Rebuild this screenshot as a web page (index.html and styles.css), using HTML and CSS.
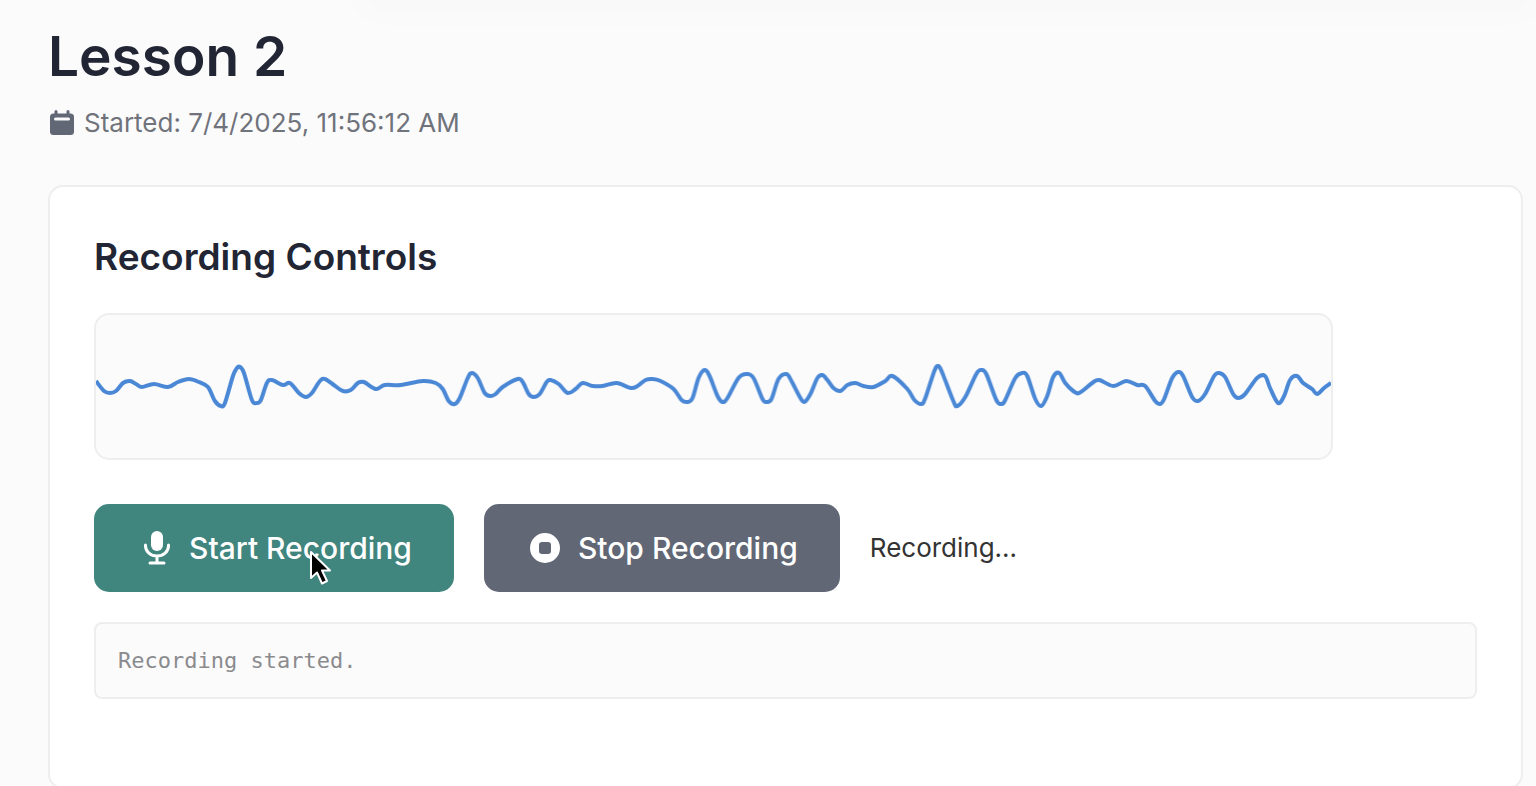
FILE: index.html
```html
<!DOCTYPE html>
<html lang="en">
<head>
    <meta charset="UTF-8">
    <meta name="viewport" content="width=device-width, initial-scale=1.0">
    <title>Lesson 2</title>
    <link rel="stylesheet" href="styles.css">
</head>
<body>
    <header class="lesson-header">
        <h1>Lesson 2</h1>
        <p class="started">
            <svg class="calendar-icon" viewBox="0 0 26 26" aria-hidden="true">
                <path d="M7 1.5v4M19 1.5v4" stroke="currentColor" stroke-width="3" stroke-linecap="round"/>
                <rect x="1" y="3.5" width="24" height="21.5" rx="3.5" fill="currentColor"/>
                <path d="M6.5 9h13" stroke="#fbfbfc" stroke-width="3" stroke-linecap="round"/>
            </svg>
            <span>Started: 7/4/2025, 11:56:12 AM</span>
        </p>
    </header>
    <main class="card">
        <h2>Recording Controls</h2>
        <canvas id="waveform" class="waveform" width="1236" height="143"></canvas>
        <div class="controls">
            <button type="button" class="btn btn-start" id="start">
                <svg class="mic-icon" viewBox="-4 0 36 36" aria-hidden="true">
                    <rect x="11" y="1" width="12" height="20" rx="6" fill="currentColor"/>
                    <path d="M5.500 15v1a11.500 10 0 0 0 23 0v-1M17 26v7M10 33h14" fill="none" stroke="currentColor" stroke-width="3" stroke-linecap="round"/>
                </svg>
                <span>Start Recording</span>
                <svg class="cursor" viewBox="0 0 24 38" aria-hidden="true">
                    <path d="M2 3v26l6-5.500 5 11 5-2.500-5-10.500h8z" fill="#000" stroke="#fff" stroke-width="2" stroke-linejoin="round"/>
                </svg>
            </button>
            <button type="button" class="btn btn-stop" id="stop">
                <svg class="stop-icon" viewBox="-4 0 34 30" aria-hidden="true">
                    <path fill="currentColor" fill-rule="evenodd" d="M15 0a15 15 0 1 1 0 30a15 15 0 1 1 0-30zM12 9a3 3 0 0 0-3 3v6a3 3 0 0 0 3 3h6a3 3 0 0 0 3-3v-6a3 3 0 0 0-3-3z"/>
                </svg>
                <span>Stop Recording</span>
            </button>
            <span class="status" id="status">Recording...</span>
        </div>
        <div class="log" id="log">Recording started.</div>
    </main>
    <script src="script.js"></script>
</body>
</html>
```
FILE: styles.css
```css
* {
    box-sizing: border-box;
}

html {
    overflow: hidden;
}

body {
    font-family: Inter, sans-serif;
    margin: 0;
    padding: 24px 13px 0 48px;
    background: #fbfbfc;
    color: #222533;
}

/* soft shadow of the bar above the page */
body::before {
    content: "";
    position: absolute;
    top: -20px;
    left: 360px;
    right: 0;
    height: 20px;
    box-shadow: 0 4px 40px rgba(0, 0, 0, 0.03);
}

h1 {
    margin: 0;
    font-size: 55px;
    font-weight: 600;
    line-height: 64px;
}

.started {
    display: flex;
    align-items: center;
    gap: 9px;
    margin: 18px 0 46px;
    padding-left: 1px;
    font-size: 26px;
    line-height: 33px;
    color: #70737b;
}

.calendar-icon {
    width: 26px;
    height: 26px;
    color: #616775;
}

.card {
    padding: 46px 44px 88px;
    background: #fff;
    border: 2px solid #eee;
    border-radius: 15px;
}

h2 {
    margin: 0 0 32px;
    font-size: 37px;
    font-weight: 600;
    line-height: 48px;
}

.waveform {
    display: block;
    width: 100%;
    max-width: 1239px;
    background: #fbfbfc;
    border: 2px solid #eee;
    border-radius: 15px;
}

.controls {
    display: flex;
    align-items: center;
    gap: 30px;
    margin: 44px 0 30px;
}

.btn {
    position: relative;
    display: flex;
    align-items: center;
    height: 88px;
    padding: 0 42px;
    border: none;
    border-radius: 15px;
    color: #fff;
    font-family: inherit;
    font-size: 30px;
    font-weight: 500;
    cursor: pointer;
}

.btn-start {
    gap: 17px;
    background: #40857e;
}

.btn-stop {
    gap: 18px;
    background: #616775;
}

.mic-icon {
    width: 36px;
    height: 36px;
}

.stop-icon {
    width: 34px;
    height: 30px;
}

.cursor {
    position: absolute;
    top: 45px;
    left: 215px;
    width: 24px;
    height: 38px;
}

.status {
    font-size: 26px;
    color: #333;
}

.log {
    padding: 20px 22px;
    background: #fbfbfc;
    border: 2px solid #eee;
    border-radius: 8px;
    font-family: "DejaVu Sans Mono", monospace;
    font-size: 22px;
    line-height: 33px;
    color: #8b8b8e;
}
```
FILE: script.js
```js
const canvas = document.getElementById('waveform');
const ctx = canvas.getContext('2d');

const samples = [
    [0,66],[8,76],[14,78],[20,76],[27,68],[34,66],[40,69],[46,72],[58,69],[72,72],[82,67],[93,64],
    [103,67],[112,72],[119,86],[125,91],[129,88],[137,61],[141,53],[144,52],[148,58],[156,85],[161,88],[165,85],
    [171,68],[176,65],[187,70],[194,68],[203,78],[210,82],[216,78],[224,66],[229,64],[238,70],[247,76],[255,75],
    [262,68],[268,67],[280,74],[289,70],[305,70],[327,66],[340,68],[347,74],[353,86],[359,89],[364,83],[372,63],
    [376,58],[382,63],[389,78],[395,81],[400,79],[407,72],[422,64],[427,67],[433,79],[438,82],[444,79],[451,67],
    [455,65],[463,69],[472,78],[480,74],[487,68],[497,71],[507,71],[521,68],[535,73],[542,71],[550,65],[557,64],
    [565,66],[578,74],[586,85],[592,87],[597,83],[603,63],[609,55],[614,61],[622,81],[627,87],[632,83],[643,63],
    [651,59],[658,63],[667,84],[671,87],[676,84],[683,64],[691,59],[696,66],[705,83],[709,87],[715,79],[722,63],
    [727,60],[732,65],[738,73],[745,76],[752,70],[760,68],[768,71],[778,72],[790,66],[797,61],[812,74],[819,85],
    [826,89],[830,83],[839,56],[843,51],[847,58],[858,86],[862,91],[870,82],[881,59],[886,55],[891,59],[901,85],
    [906,89],[910,85],[920,63],[927,58],[932,61],[940,84],[946,91],[952,81],[958,62],[964,58],[970,68],[978,76],
    [984,78],[997,68],[1004,65],[1018,71],[1031,66],[1042,70],[1050,71],[1060,86],[1065,89],[1069,84],[1077,63],[1083,57],
    [1088,61],[1097,82],[1103,86],[1110,79],[1119,61],[1124,58],[1130,62],[1138,79],[1143,83],[1150,79],[1162,63],[1170,61],
    [1175,73],[1183,88],[1189,81],[1195,65],[1202,61],[1208,68],[1217,74],[1222,79],[1229,73],[1236,68]
];

function drawWaveform(points) {
    ctx.clearRect(0, 0, canvas.width, canvas.height);
    ctx.lineWidth = 4;
    ctx.lineJoin = 'round';
    ctx.strokeStyle = '#4a88d6';
    ctx.beginPath();
    ctx.moveTo(points[0][0], points[0][1]);
    for (let i = 0; i < points.length - 1; i++) {
        const prev = points[i - 1] || points[i];
        const cur = points[i];
        const next = points[i + 1];
        const after = points[i + 2] || next;
        ctx.bezierCurveTo(
            cur[0] + (next[0] - prev[0]) / 6, cur[1] + (next[1] - prev[1]) / 6,
            next[0] - (after[0] - cur[0]) / 6, next[1] - (after[1] - cur[1]) / 6,
            next[0], next[1]
        );
    }
    ctx.stroke();
}

drawWaveform(samples);
```
